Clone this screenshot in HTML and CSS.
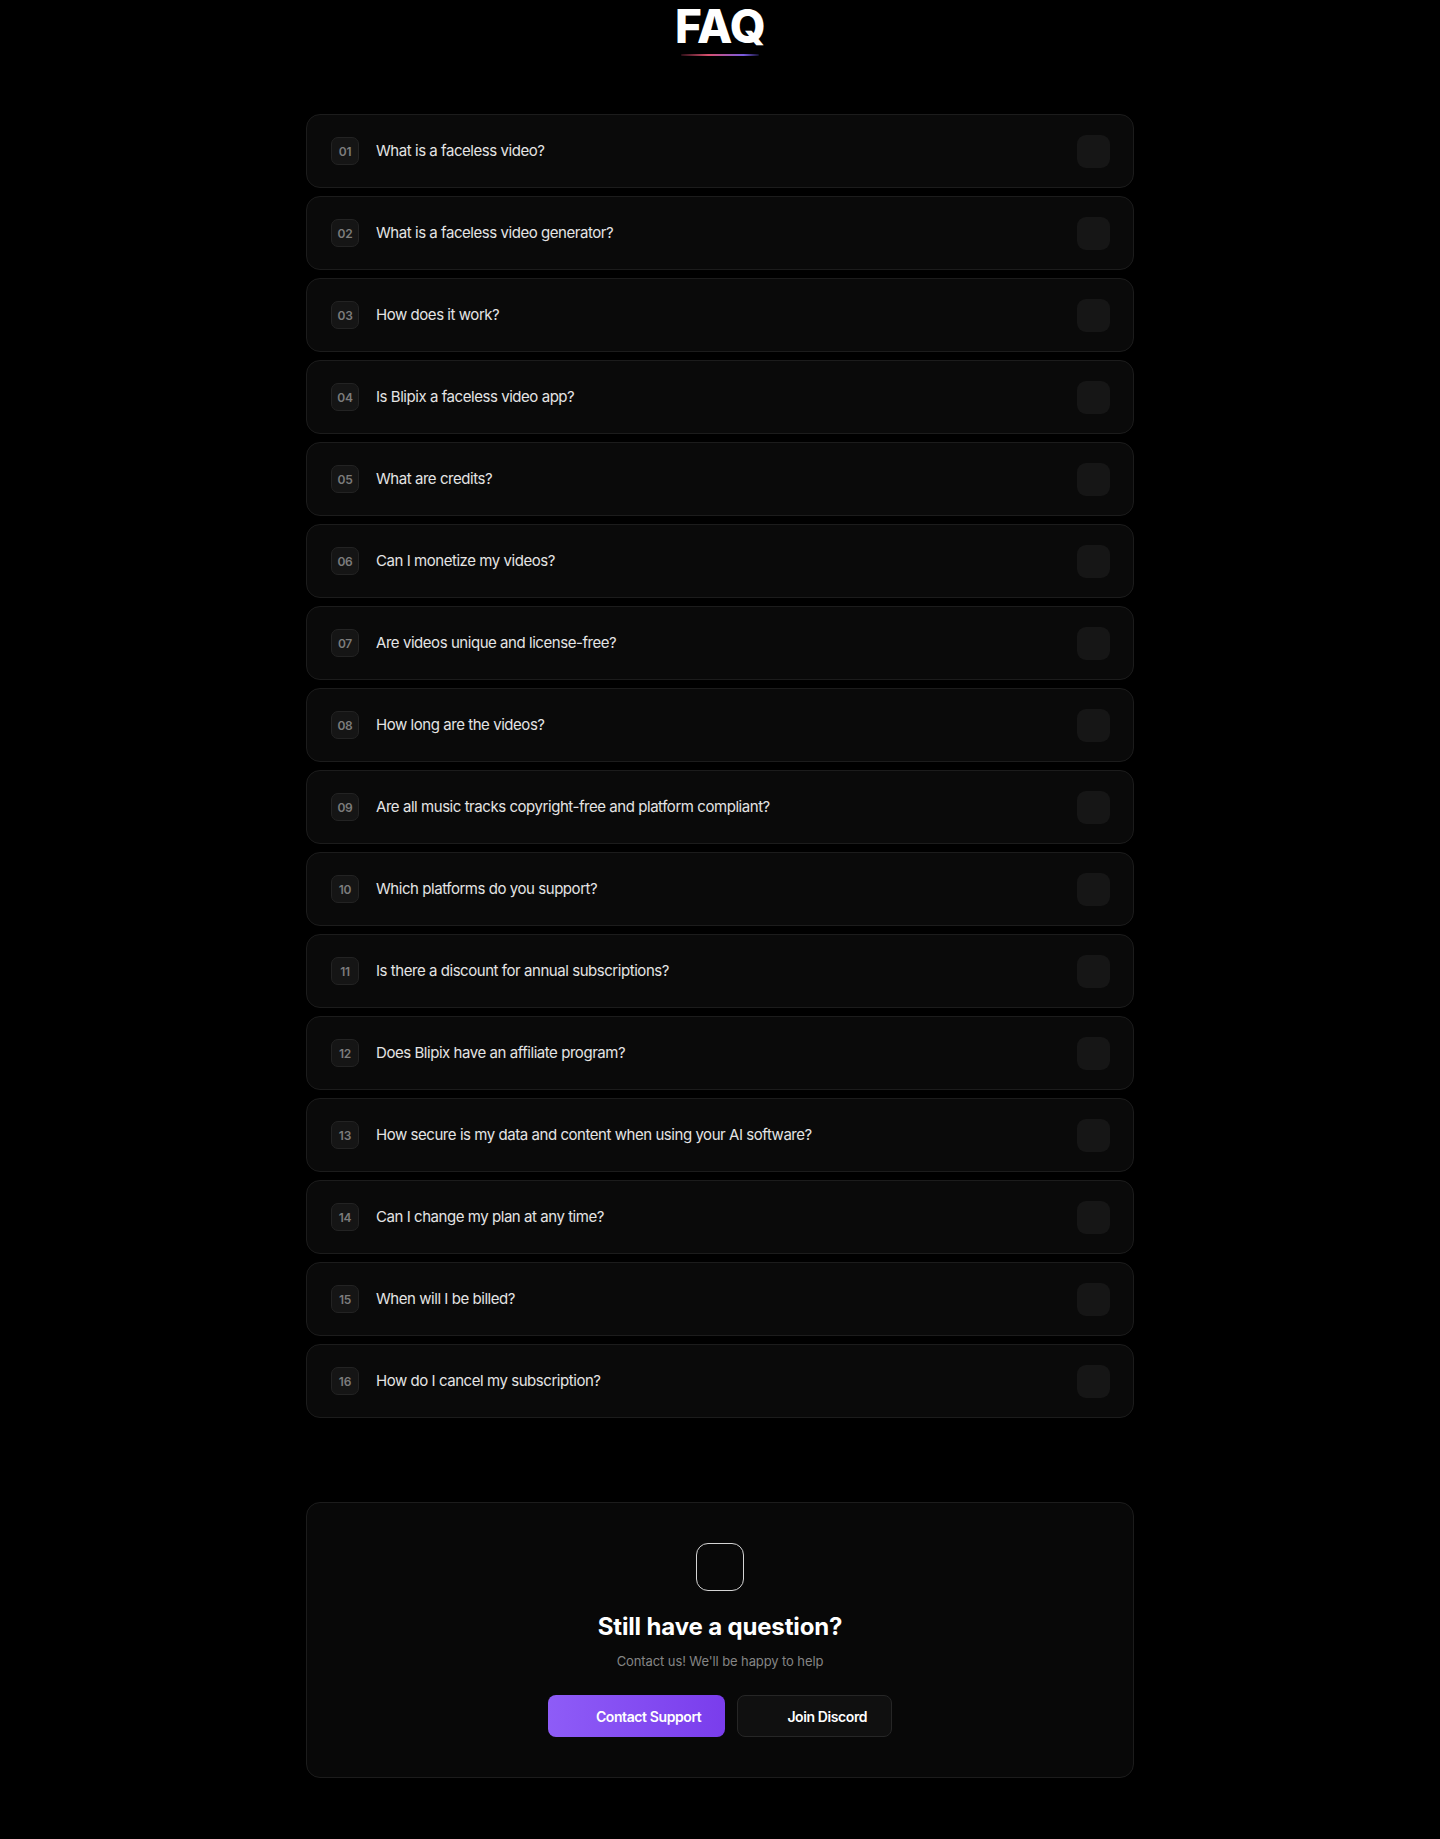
FILE: index.html
```html
<!DOCTYPE html>
<html lang="en">
<head>
    <meta charset="UTF-8">
    <meta name="viewport" content="width=device-width, initial-scale=1.0">
    <title>FAQ</title>
    <link rel="stylesheet" href="styles.css">
</head>
<body>
    <section class="faq">
        <div class="faq-head">
            <h1>FAQ</h1>
            <span class="underline"></span>
        </div>

        <div class="faq-list">
            <div class="faq-item"><span class="num">01</span><span class="question">What is a faceless video?</span><span class="toggle"></span></div>
            <div class="faq-item"><span class="num">02</span><span class="question">What is a faceless video generator?</span><span class="toggle"></span></div>
            <div class="faq-item"><span class="num">03</span><span class="question">How does it work?</span><span class="toggle"></span></div>
            <div class="faq-item"><span class="num">04</span><span class="question">Is Blipix a faceless video app?</span><span class="toggle"></span></div>
            <div class="faq-item"><span class="num">05</span><span class="question">What are credits?</span><span class="toggle"></span></div>
            <div class="faq-item"><span class="num">06</span><span class="question">Can I monetize my videos?</span><span class="toggle"></span></div>
            <div class="faq-item"><span class="num">07</span><span class="question">Are videos unique and license-free?</span><span class="toggle"></span></div>
            <div class="faq-item"><span class="num">08</span><span class="question">How long are the videos?</span><span class="toggle"></span></div>
            <div class="faq-item"><span class="num">09</span><span class="question">Are all music tracks copyright-free and platform compliant?</span><span class="toggle"></span></div>
            <div class="faq-item"><span class="num">10</span><span class="question">Which platforms do you support?</span><span class="toggle"></span></div>
            <div class="faq-item"><span class="num">11</span><span class="question">Is there a discount for annual subscriptions?</span><span class="toggle"></span></div>
            <div class="faq-item"><span class="num">12</span><span class="question">Does Blipix have an affiliate program?</span><span class="toggle"></span></div>
            <div class="faq-item"><span class="num">13</span><span class="question">How secure is my data and content when using your AI software?</span><span class="toggle"></span></div>
            <div class="faq-item"><span class="num">14</span><span class="question">Can I change my plan at any time?</span><span class="toggle"></span></div>
            <div class="faq-item"><span class="num">15</span><span class="question">When will I be billed?</span><span class="toggle"></span></div>
            <div class="faq-item"><span class="num">16</span><span class="question">How do I cancel my subscription?</span><span class="toggle"></span></div>
        </div>

        <div class="contact-card">
            <div class="contact-icon"></div>
            <h2>Still have a question?</h2>
            <p>Contact us! We'll be happy to help</p>
            <div class="actions">
                <a class="btn btn-primary" href="#"><span class="btn-icon"></span>Contact Support</a>
                <a class="btn btn-dark" href="#"><span class="btn-icon"></span>Join Discord</a>
            </div>
        </div>
    </section>
</body>
</html>
```

FILE: styles.css
```css
body {
    margin: 0;
    background: #000;
    color: #fff;
    font-family: Inter, "Liberation Sans", sans-serif;
}
.faq {
    width: 828px;
    margin: 0 auto;
    padding-bottom: 63px;
}
.faq-head {
    display: flex;
    flex-direction: column;
    align-items: center;
}
h1 {
    margin: 0;
    font-size: 46px;
    line-height: 52px;
    font-weight: 800;
    letter-spacing: -0.6px;
}
.underline {
    display: block;
    width: 78px;
    height: 2px;
    margin-top: 2px;
    border-radius: 2px;
    background: linear-gradient(90deg, rgba(225, 70, 110, 0.2), #d8506e 35%, #7a5be0 80%, rgba(90, 80, 230, 0.2));
}
.faq-list {
    margin-top: 58px;
    display: flex;
    flex-direction: column;
    gap: 8px;
}
.faq-item {
    height: 74px;
    box-sizing: border-box;
    padding: 0 23px 0 24px;
    display: flex;
    align-items: center;
    background: #0a0a0a;
    border: 1px solid #1c1c1c;
    border-radius: 14px;
}
.num {
    width: 28px;
    height: 28px;
    box-sizing: border-box;
    display: flex;
    align-items: center;
    justify-content: center;
    background: #151515;
    border: 1px solid #232323;
    border-radius: 7px;
    color: #7c7c7c;
    font-size: 12px;
    font-weight: 600;
    letter-spacing: -0.2px;
}
.question {
    flex: 1;
    margin-left: 17px;
    padding-bottom: 2px;
    font-size: 15px;
    color: #e4e4e4;
    letter-spacing: -0.45px;
}
.toggle {
    width: 33px;
    height: 33px;
    background: #161616;
    border-radius: 9px;
}
.contact-card {
    margin-top: 84px;
    padding: 40px 0;
    display: flex;
    flex-direction: column;
    align-items: center;
    background: #080808;
    border: 1px solid #1c1c1c;
    border-radius: 14px;
}
.contact-icon {
    width: 48px;
    height: 48px;
    box-sizing: border-box;
    border: 1px solid #d4d4d4;
    border-radius: 12px;
}
h2 {
    margin: 20px 0 0;
    font-size: 24px;
    line-height: 32px;
    font-weight: 700;
    letter-spacing: -0.15px;
}
.contact-card p {
    margin: 8px 0 0;
    font-size: 13px;
    line-height: 20px;
    color: #858585;
    letter-spacing: -0.1px;
}
.actions {
    margin-top: 24px;
    display: flex;
    gap: 12px;
}
.btn {
    height: 42px;
    box-sizing: border-box;
    padding: 0 24px;
    display: flex;
    align-items: center;
    border-radius: 8px;
    color: #fff;
    font-size: 14px;
    font-weight: 600;
    letter-spacing: -0.4px;
    text-decoration: none;
}
.btn-icon {
    width: 16px;
    height: 16px;
    margin-right: 8px;
}
.btn-primary {
    background: linear-gradient(90deg, #8e5cf7, #7a3dec);
}
.btn-dark {
    background: #101010;
    border: 1px solid #262626;
    padding-left: 25px;
}
```
